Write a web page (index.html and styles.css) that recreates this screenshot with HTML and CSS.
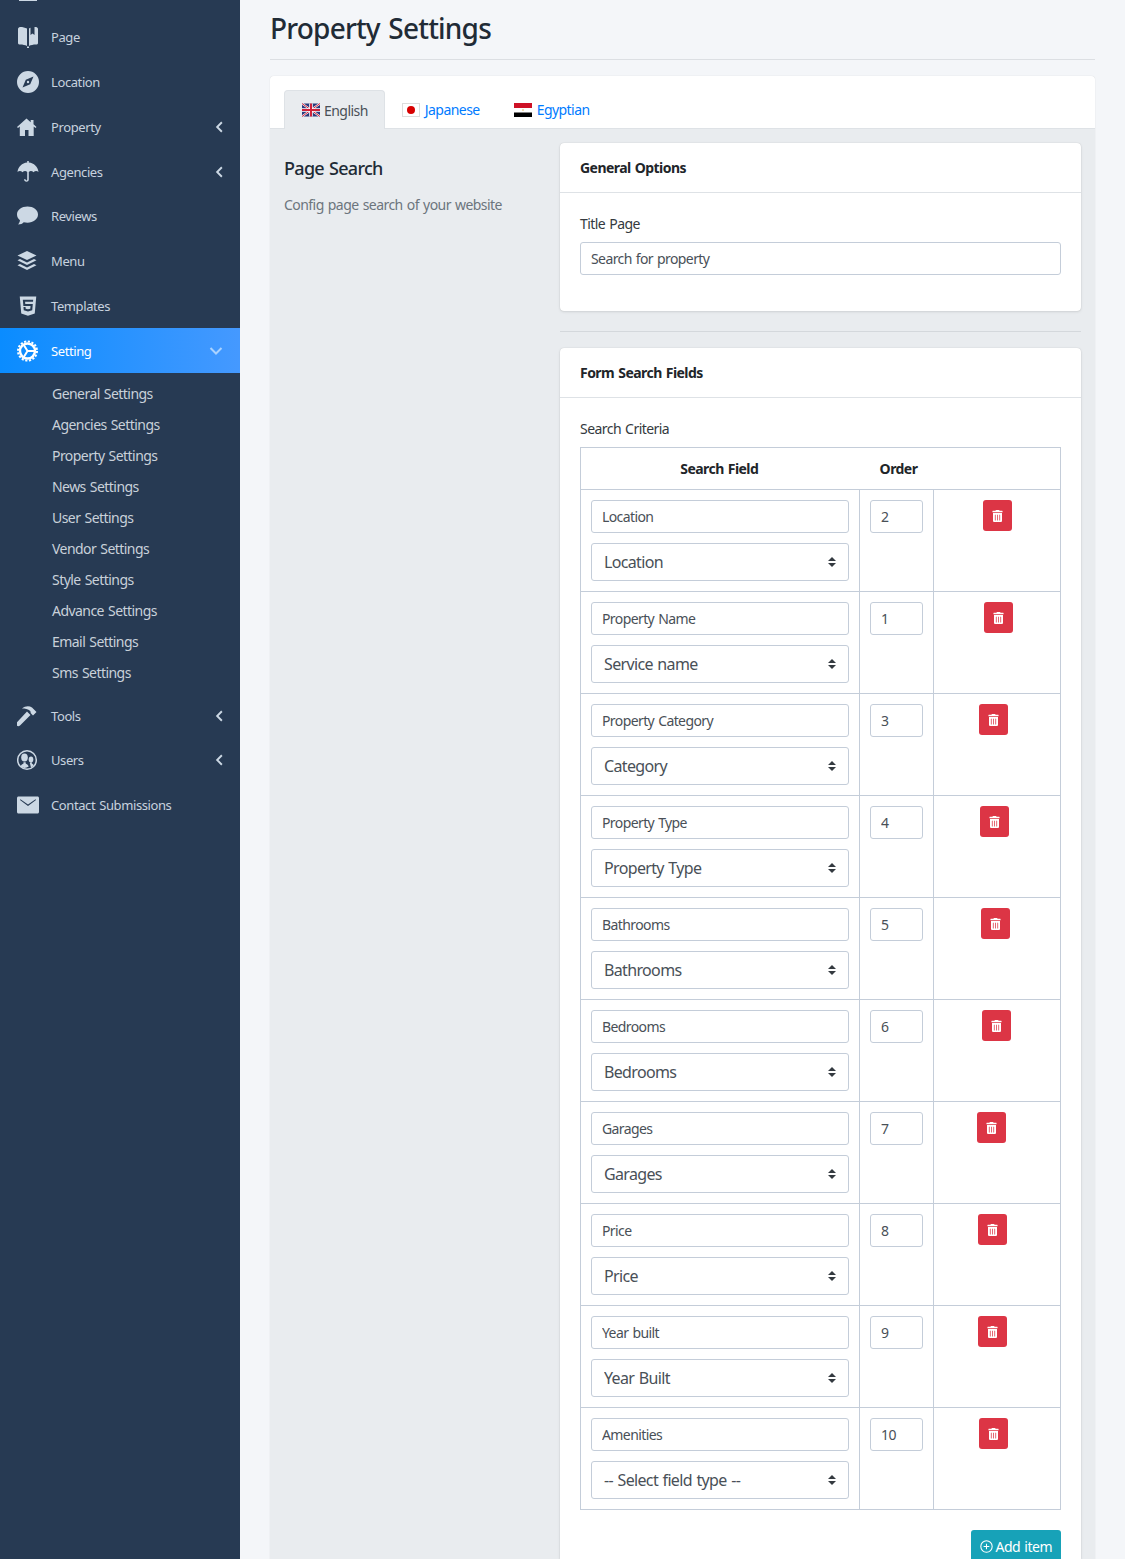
FILE: index.html

```html
<!DOCTYPE html>
<html lang="en">
<head>
    <meta charset="UTF-8">
    <title>Property Settings</title>
    <link rel="stylesheet" href="styles.css">
</head>
<body>

    <!-- Sidebar -->
    <aside class="sidebar">
        <ul class="menu">
            <li class="menu-item">
                <svg class="menu-icon" viewBox="0 0 22 22"><path d="M2 2h18v18H2z"/></svg>
            </li>
            <li class="menu-item">
                <svg class="menu-icon" viewBox="0 0 22 22"><path d="M1 3c0-1 1-2 2-2 3 0 5 .5 7 1.600V20c-2-1-4-1.500-7-1.500-1 0-2-.5-2-1.500zM12 2.500c.5-.4 1-.6 1.500-.8V9l2-1.500L17.500 9V1.100l1.500-.1c1 0 2 1 2 2v14c0 1-1 1.500-2 1.500-3 0-5 .5-7 1.500V2.500zM10 20.500h2v1.500h-2z"/></svg>
                <span>Page</span>
            </li>
            <li class="menu-item">
                <svg class="menu-icon" viewBox="0 0 22 22"><path fill-rule="evenodd" d="M11 0a11 11 0 1 0 0 22 11 11 0 0 0 0-22zm5.500 5.500-3.300 7.700-7.700 3.300 3.300-7.700zM11 9.800a1.200 1.200 0 1 0 0 2.400 1.200 1.200 0 0 0 0-2.400z"/></svg>
                <span>Location</span>
            </li>
            <li class="menu-item">
                <svg class="menu-icon" viewBox="0 0 22 22"><path d="M9.500 2.500 0 11l1 1 1.800-1.500V20H8v-6h3.500v6h5.200v-9.500l1.800 1.500 1-1-3-2.700V4h-2.800v2.300z"/></svg>
                <span>Property</span>
                <svg class="menu-arrow" viewBox="0 0 10 14"><path d="M8 1.500 2.500 7 8 12.500"/></svg>
            </li>
            <li class="menu-item">
                <svg class="menu-icon" viewBox="0 0 22 22"><path d="M10.200 0h1.600v1.600C17 2 20.800 5.800 21.500 11c-1.500-1.500-3.500-1.500-5 .3-1.500-1.700-3.500-1.700-4.700-.2v7.400c0 3-4.800 3-4.800-.2h1.600c0 1.400 1.600 1.400 1.600.2v-7.400c-1.200-1.500-3.200-1.500-4.700.2C4 9.500 2 9.500.5 11 1.200 5.800 5 2 10.200 1.600z"/></svg>
                <span>Agencies</span>
                <svg class="menu-arrow" viewBox="0 0 10 14"><path d="M8 1.500 2.500 7 8 12.500"/></svg>
            </li>
            <li class="menu-item">
                <svg class="menu-icon" viewBox="0 0 22 22"><path d="M10.500 1.500C4.700 1.500 0 5 0 9.500c0 2.300 1.200 4.300 3 5.700-.2 1.600-1 3-1.800 4.300 2.300 0 4.300-1 5.500-2.300 1.200.3 2.500.5 3.800.5 5.800 0 10.500-3.700 10.500-8.200S16.300 1.500 10.500 1.500z"/></svg>
                <span>Reviews</span>
            </li>
            <li class="menu-item">
                <svg class="menu-icon" viewBox="0 0 22 22"><path d="M10 1 .5 5.500 10 10l9.500-4.500zM3 9 .5 10.300 10 15l9.500-4.700L17 9l-7 3.400zM3 14 .5 15.300 10 20l9.500-4.700L17 14l-7 3.400z"/></svg>
                <span>Menu</span>
            </li>
            <li class="menu-item">
                <svg class="menu-icon html5" viewBox="0 0 384 512"><path d="M0 32l34.900 395.800L191.500 480l157.600-52.200L384 32H0zm308.200 127.900H124.400l4.100 49.400h175.600l-13.600 148.400-97.900 27v.3h-1.100l-98.700-27.300-6-75.800h47.700L138 320l53.500 14.500 53.700-14.500 6-62.200H84.300L71.500 112.200h241.100l-4.400 47.700z"/></svg>
                <span>Templates</span>
            </li>
            <li class="menu-item active">
                <svg class="menu-icon gear" viewBox="0 0 22 22">
                    <circle cx="10.500" cy="11" r="9.500" stroke-width="2" stroke-dasharray="2.200 1.530"/>
                    <circle cx="10.500" cy="11" r="7.500" stroke-width="2.400"/>
                    <path d="M10.500 11H18M10.500 11 6.500 4.500M10.500 11l-4 6.500" stroke-width="2"/>
                </svg>
                <span>Setting</span>
                <svg class="menu-arrow down" viewBox="0 0 14 10"><path d="M1.500 2 7 7.500 12.500 2"/></svg>
            </li>
            <li>
                <ul class="submenu">
                    <li>General Settings</li>
                    <li>Agencies Settings</li>
                    <li>Property Settings</li>
                    <li>News Settings</li>
                    <li>User Settings</li>
                    <li>Vendor Settings</li>
                    <li>Style Settings</li>
                    <li>Advance Settings</li>
                    <li>Email Settings</li>
                    <li>Sms Settings</li>
                </ul>
            </li>
            <li class="menu-item">
                <svg class="menu-icon" viewBox="0 0 22 22"><path d="M5 3.500C8 1 12 .5 15 2.500l4.500 4.500-3.500 3.500-2.200-2.200-.5-2.300C11 4 8 3.500 5 3.500zM10 6.500l3.500 3.500L3 20.500c-1 1-2.500 1-3.300 0-.8-.8-.7-2.200 0-3z"/></svg>
                <span>Tools</span>
                <svg class="menu-arrow" viewBox="0 0 10 14"><path d="M8 1.500 2.500 7 8 12.500"/></svg>
            </li>
            <li class="menu-item">
                <svg class="menu-icon" viewBox="0 0 22 22">
                    <circle class="ring" cx="10" cy="11" r="9.300"/>
                    <ellipse cx="7.500" cy="8.500" rx="3.300" ry="3.900"/>
                    <path d="M3.500 17.500c.4-1.700 2.300-2.300 3-3v-1.200h2.200v1.200c.8.700 2.600 1.300 3 3A9 9 0 0 1 7.500 19a9 9 0 0 1-4-1.500z"/>
                    <ellipse cx="14" cy="10.500" rx="2.300" ry="2.900"/>
                    <path d="M12.800 14.500c.4-.3.500-.6.500-1.200h1.500v1.200c.6.500 1.700.8 2 1.800a9 9 0 0 1-2.800 2.200c-.2-1-.6-2.600-1.200-4z"/>
                </svg>
                <span>Users</span>
                <svg class="menu-arrow" viewBox="0 0 10 14"><path d="M8 1.500 2.500 7 8 12.500"/></svg>
            </li>
            <li class="menu-item">
                <svg class="menu-icon" viewBox="0 0 22 22"><path fill-rule="evenodd" d="M1.500 2.500h19c.8 0 1.500.7 1.500 1.500v14c0 .8-.7 1.500-1.500 1.500h-19C.7 19.500 0 18.800 0 18V4c0-.8.700-1.500 1.500-1.500zM3 6l8 6 8-6v-.6h-.8L11 10.500 3.800 5.400H3z"/></svg>
                <span>Contact Submissions</span>
            </li>
        </ul>
    </aside>

    <!-- Main content -->
    <main class="content">
        <h1 class="page-title">Property Settings</h1>
        <hr class="title-line">

        <div class="settings-card">
            <div class="tabs">
                <div class="tab active">
                    <svg class="flag" viewBox="0 0 18 13">
                        <rect width="18" height="13" fill="#2b3a7c"/>
                        <path d="M0 0l18 13M18 0L0 13" stroke="#fff" stroke-width="2"/>
                        <path d="M0 0l18 13M18 0L0 13" stroke="#d0223a" stroke-width="1"/>
                        <path d="M9 0v13M0 6.500h18" stroke="#fff" stroke-width="3.500"/>
                        <path d="M9 0v13M0 6.500h18" stroke="#d0223a" stroke-width="2"/>
                    </svg>
                    English
                </div>
                <div class="tab">
                    <svg class="flag" viewBox="0 0 18 14">
                        <rect x=".5" y=".5" width="17" height="13" fill="#fff" stroke="#ddd"/>
                        <circle cx="9" cy="7" r="4" fill="#d80000"/>
                    </svg>
                    Japanese
                </div>
                <div class="tab">
                    <svg class="flag" viewBox="0 0 18 14">
                        <rect width="18" height="5" fill="#ce1126"/>
                        <rect y="5" width="18" height="4.500" fill="#fff"/>
                        <rect y="9.500" width="18" height="4.500" fill="#000"/>
                        <circle cx="9" cy="7" r=".8" fill="#e0b050"/>
                    </svg>
                    Egyptian
                </div>
            </div>

            <div class="settings-body">
                <div class="intro">
                    <h2>Page Search</h2>
                    <p>Config page search of your website</p>
                </div>

                <div class="panels">
                    <section class="panel">
                        <h3 class="panel-head">General Options</h3>
                        <div class="panel-body first">
                            <label class="field-label">Title Page</label>
                            <input class="text-input" type="text" value="Search for property">
                        </div>
                    </section>

                    <hr class="panel-line">

                    <section class="panel">
                        <h3 class="panel-head">Form Search Fields</h3>
                        <div class="panel-body">
                            <label class="field-label">Search Criteria</label>
                            <table class="fields-table">
                                <thead>
                                    <tr>
                                        <th>Search Field</th>
                                        <th>Order</th>
                                        <th></th>
                                    </tr>
                                </thead>
                                <tbody>
                                    <tr>
                                        <td><input class="text-input" value="Location"><select class="select-input"><option>Location</option></select></td>
                                        <td><input class="text-input" value="2"></td>
                                        <td><button class="delete-btn"><svg viewBox="0 0 448 512"><use href="#trash"/></svg></button></td>
                                    </tr>
                                    <tr>
                                        <td><input class="text-input" value="Property Name"><select class="select-input"><option>Service name</option></select></td>
                                        <td><input class="text-input" value="1"></td>
                                        <td><button class="delete-btn"><svg viewBox="0 0 448 512"><use href="#trash"/></svg></button></td>
                                    </tr>
                                    <tr>
                                        <td><input class="text-input" value="Property Category"><select class="select-input"><option>Category</option></select></td>
                                        <td><input class="text-input" value="3"></td>
                                        <td><button class="delete-btn"><svg viewBox="0 0 448 512"><use href="#trash"/></svg></button></td>
                                    </tr>
                                    <tr>
                                        <td><input class="text-input" value="Property Type"><select class="select-input"><option>Property Type</option></select></td>
                                        <td><input class="text-input" value="4"></td>
                                        <td><button class="delete-btn"><svg viewBox="0 0 448 512"><use href="#trash"/></svg></button></td>
                                    </tr>
                                    <tr>
                                        <td><input class="text-input" value="Bathrooms"><select class="select-input"><option>Bathrooms</option></select></td>
                                        <td><input class="text-input" value="5"></td>
                                        <td><button class="delete-btn"><svg viewBox="0 0 448 512"><use href="#trash"/></svg></button></td>
                                    </tr>
                                    <tr>
                                        <td><input class="text-input" value="Bedrooms"><select class="select-input"><option>Bedrooms</option></select></td>
                                        <td><input class="text-input" value="6"></td>
                                        <td><button class="delete-btn"><svg viewBox="0 0 448 512"><use href="#trash"/></svg></button></td>
                                    </tr>
                                    <tr>
                                        <td><input class="text-input" value="Garages"><select class="select-input"><option>Garages</option></select></td>
                                        <td><input class="text-input" value="7"></td>
                                        <td><button class="delete-btn"><svg viewBox="0 0 448 512"><use href="#trash"/></svg></button></td>
                                    </tr>
                                    <tr>
                                        <td><input class="text-input" value="Price"><select class="select-input"><option>Price</option></select></td>
                                        <td><input class="text-input" value="8"></td>
                                        <td><button class="delete-btn"><svg viewBox="0 0 448 512"><use href="#trash"/></svg></button></td>
                                    </tr>
                                    <tr>
                                        <td><input class="text-input" value="Year built"><select class="select-input"><option>Year Built</option></select></td>
                                        <td><input class="text-input" value="9"></td>
                                        <td><button class="delete-btn"><svg viewBox="0 0 448 512"><use href="#trash"/></svg></button></td>
                                    </tr>
                                    <tr>
                                        <td><input class="text-input" value="Amenities"><select class="select-input"><option>-- Select field type --</option></select></td>
                                        <td><input class="text-input" value="10"></td>
                                        <td><button class="delete-btn"><svg viewBox="0 0 448 512"><use href="#trash"/></svg></button></td>
                                    </tr>
                                </tbody>
                            </table>
                            <div class="table-actions">
                                <button class="add-btn">
                                    <svg viewBox="0 0 16 16"><circle cx="8" cy="8" r="7"/><path d="M8 4.500v7M4.500 8h7"/></svg>
                                    Add item
                                </button>
                            </div>
                        </div>
                    </section>
                </div>
            </div>
        </div>
    </main>

    <!-- Shared trash icon -->
    <svg class="icon-defs">
        <symbol id="trash" viewBox="0 0 448 512">
            <path d="M32 464a48 48 0 0 0 48 48h288a48 48 0 0 0 48-48V128H32zm272-256a16 16 0 0 1 32 0v224a16 16 0 0 1-32 0zm-96 0a16 16 0 0 1 32 0v224a16 16 0 0 1-32 0zm-96 0a16 16 0 0 1 32 0v224a16 16 0 0 1-32 0zM432 32H312l-9.400-18.700A24 24 0 0 0 281.100 0H166.800a23.700 23.700 0 0 0-21.400 13.300L136 32H16A16 16 0 0 0 0 48v32a16 16 0 0 0 16 16h416a16 16 0 0 0 16-16V48a16 16 0 0 0-16-16z"/>
        </symbol>
    </svg>

</body>
</html>
```

FILE: styles.css

```css
* {
    box-sizing: border-box;
}
html, body {
    height: 1559px;
    overflow: hidden;
}
body {
    margin: 0;
    display: flex;
    font-family: "Noto Sans", sans-serif;
    font-size: 14px;
    letter-spacing: -0.55px;
    word-spacing: 1px;
    color: #212529;
    background-color: #f4f6f9;
}
.icon-defs {
    display: none;
}

/* Sidebar */
.sidebar {
    width: 240px;
    flex-shrink: 0;
    background-color: #273a53;
    color: #c7d2df;
}
.menu, .submenu {
    list-style: none;
    margin: 0;
    padding: 0;
}
.menu {
    margin-top: -30px;
}
.menu-item {
    height: 44.8px;
    padding: 0 17px;
    display: flex;
    align-items: center;
    gap: 12px;
    font-size: 13px;
    letter-spacing: -0.4px;
}
.menu-item span {
    flex: 1;
}
.menu-icon {
    width: 22px;
    height: 22px;
    fill: #ccd8e4;
    flex-shrink: 0;
}
.menu-icon .ring {
    fill: none;
    stroke: #ccd8e4;
    stroke-width: 1.5;
}
.menu-arrow {
    width: 8.6px;
    height: 12px;
    margin-right: -1px;
    fill: none;
    stroke: #ccd8e4;
    stroke-width: 2.2;
}
.menu-arrow.down {
    width: 14px;
    height: 10px;
    margin-right: 0;
    stroke: #a9d2ff;
    stroke-width: 2;
}
.menu-item.active {
    background: linear-gradient(to right, #0a8cff, #4599ff);
    color: #fff;
}
.menu-icon.gear {
    fill: none;
    stroke: #fff;
}
.submenu {
    padding: 5px 0;
}
.submenu li {
    height: 31px;
    line-height: 31px;
    padding-left: 52px;
    color: #c9d1da;
}

/* Main */
.content {
    flex: 1;
    padding: 0 30px;
    min-width: 0;
}
.page-title {
    margin: 8px 0 0;
    font-size: 28px;
    font-weight: 500;
    line-height: 40px;
    letter-spacing: -0.8px;
    word-spacing: 2px;
    color: #212b36;
}
.title-line {
    margin: 11px 0 16px;
    border: 0;
    border-top: 1px solid #dcdfe3;
}
.settings-card {
    background-color: #e9ecef;
    border-radius: 4px;
    box-shadow: 0 0 1px rgba(0, 0, 0, 0.2);
    height: 1600px;
}
.tabs {
    display: flex;
    height: 53px;
    padding: 14px 14px 0;
    background-color: #fff;
    border-bottom: 1px solid #dee2e6;
    border-radius: 4px 4px 0 0;
}
.tab {
    height: 39px;
    padding: 0 17px;
    display: flex;
    align-items: center;
    gap: 5px;
    color: #007bff;
}
.tab.active {
    background-color: #e9ecef;
    color: #495057;
    border-radius: 4px 4px 0 0;
    border: 1px solid #dee2e6;
    border-bottom: 0;
    gap: 4px;
    padding: 0 16px 0 17px;
}
.flag {
    width: 18px;
    height: 14px;
}
.settings-body {
    display: flex;
    padding: 14px;
}
.intro {
    width: 276px;
    flex-shrink: 0;
}
.intro h2 {
    margin: 12px 0 0;
    font-size: 18px;
    font-weight: 500;
    line-height: 27px;
    letter-spacing: -0.7px;
    color: #212b36;
}
.intro p {
    margin: 13px 0 0;
    color: #6c757d;
}
.panels {
    flex: 1;
}
.panel {
    background-color: #fff;
    border-radius: 4px;
    box-shadow: 0 0 1px rgba(0, 0, 0, 0.2), 0 1px 3px rgba(0, 0, 0, 0.1);
}
.panel-head {
    margin: 0;
    padding: 0 20px;
    height: 50px;
    line-height: 50px;
    font-size: 14px;
    font-weight: 700;
    border-bottom: 1px solid #dee2e6;
}
.panel-body {
    padding: 20px 20px 0;
}
.panel-body.first {
    padding-bottom: 36px;
}
.panel-line {
    margin: 20px 0 16px;
    border: 0;
    border-top: 1px solid #d4d8dc;
}
.field-label {
    display: block;
    line-height: 21px;
    margin-bottom: 8px;
    color: #343a40;
}
.text-input, .select-input {
    display: block;
    width: 100%;
    background-color: #fff;
    border: 1px solid #c4cdd9;
    border-radius: 3px;
    color: #495057;
    font-family: inherit;
    letter-spacing: -0.6px;
    word-spacing: 1px;
    outline: none;
}
.text-input {
    height: 33px;
    padding: 0 10px;
    font-size: 14px;
}
.select-input {
    height: 38px;
    margin-top: 10px;
    padding: 0 28px 0 12px;
    font-size: 16px;
    letter-spacing: -0.65px;
    appearance: none;
    background: #fff url("data:image/svg+xml,%3csvg xmlns='http://www.w3.org/2000/svg' viewBox='0 0 4 5'%3e%3cpath fill='%23343a40' d='M2 0L0 2h4zm0 5L0 3h4z'/%3e%3c/svg%3e") no-repeat right 12px center / 8px 10px;
}
.fields-table {
    width: 481px;
    table-layout: fixed;
    border-collapse: collapse;
    border: 1px solid #c4cdd9;
}
.fields-table th {
    height: 42px;
    font-weight: 700;
    text-align: center;
    border-bottom: 1px solid #c4cdd9;
}
.fields-table th:nth-child(1) {
    width: 279px;
    padding-right: 3px;
}
.fields-table th:nth-child(2) {
    width: 74px;
    padding-left: 5px;
}
.fields-table td {
    height: 102px;
    padding: 10px;
    vertical-align: top;
    border: 1px solid #c4cdd9;
}
.fields-table td:last-child {
    padding: 10px 0 0 49px;
}
.delete-btn {
    width: 29px;
    height: 31px;
    display: block;
    padding: 0;
    background-color: #dc3545;
    border: none;
    border-radius: 3px;
}
.delete-btn svg {
    display: block;
    width: 11px;
    height: 12px;
    margin: 0 auto;
    fill: #fff;
}

/* rows do not line up in the original, each button sits a bit off */
tbody tr:nth-child(2) .delete-btn { margin-left: 1px; }
tbody tr:nth-child(3) .delete-btn { margin-left: -4px; }
tbody tr:nth-child(4) .delete-btn { margin-left: -3px; }
tbody tr:nth-child(5) .delete-btn { margin-left: -2px; }
tbody tr:nth-child(6) .delete-btn { margin-left: -1px; }
tbody tr:nth-child(7) .delete-btn { margin-left: -6px; }
tbody tr:nth-child(8) .delete-btn { margin-left: -5px; }
tbody tr:nth-child(9) .delete-btn { margin-left: -5px; }
tbody tr:nth-child(10) .delete-btn { margin-left: -4px; }

.table-actions {
    display: flex;
    justify-content: flex-end;
    margin-top: 20px;
}
.add-btn {
    height: 32px;
    padding: 0 9px;
    display: flex;
    align-items: center;
    gap: 3px;
    background-color: #17a2b8;
    color: #fff;
    border: none;
    border-radius: 3px;
    font-family: inherit;
    font-size: 14px;
    letter-spacing: -0.5px;
    word-spacing: 1px;
}
.add-btn svg {
    width: 13px;
    height: 13px;
    fill: none;
    stroke: #fff;
    stroke-width: 1.3;
}
```
